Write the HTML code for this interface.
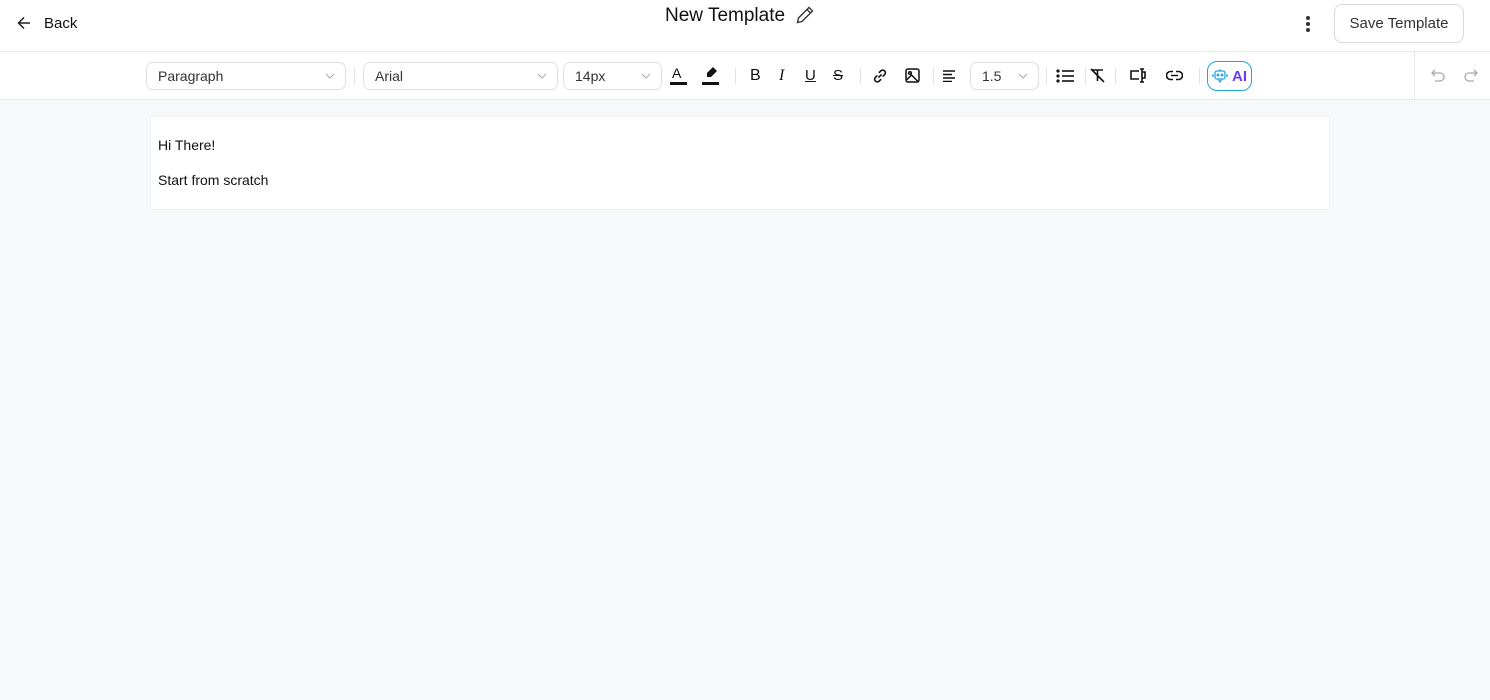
<!DOCTYPE html>
<html><head><style>
*{box-sizing:border-box;margin:0;padding:0}
body{width:1490px;height:700px;background:#f7f8fa;font-family:"Liberation Sans",Arial,sans-serif;position:relative;overflow:hidden;color:#111}
.hdr{position:absolute;left:0;top:0;width:1490px;height:52px;background:#fff;border-bottom:1px solid #e6e8eb}
.tb{position:absolute;left:0;top:52px;width:1490px;height:48px;background:#fff;border-bottom:1px solid #e6e8eb}
.a{position:absolute}
.sel{position:absolute;top:10px;height:28px;border:1px solid #dcdfe4;border-radius:7px;font-size:14px;color:#333;padding:5px 11px}
.sel svg{position:absolute;right:10px;top:10px}
.sep{position:absolute;top:16px;width:1px;height:16px;background:#e2e4e8}
</style></head><body>
<div class="hdr">
 <svg class="a" style="left:17px;top:16px" width="14" height="14" viewBox="0 0 14 14" fill="none" stroke="#222" stroke-width="1.5"><path d="M13 7H1.5M7 1.5L1.5 7 7 12.5"/></svg>
 <div class="a" style="left:44px;top:15px;font-size:15px;color:#111">Back</div>
 <div class="a" style="left:665px;top:5px;font-size:19px;color:#111">New Template</div>
 <svg class="a" style="left:795px;top:5px" width="20" height="20" viewBox="0 0 20 20" fill="none" stroke="#333" stroke-width="1.4"><path d="M14 2.5l3.5 3.5L7 16.5 2.5 17.5 3.5 13z M12 4.5l3.5 3.5"/></svg>
 <div class="a" style="left:1306px;top:16px;width:4px;height:4px;border-radius:2px;background:#333;box-shadow:0 6px 0 #333,0 12px 0 #333"></div>
 <div class="a" style="left:1334px;top:4px;width:130px;height:39px;border:1px solid #d6d9de;border-radius:8px;font-size:15px;color:#333;text-align:center;line-height:38px">Save Template</div>
</div>
<div class="tb">
 <div class="sel" style="left:146px;width:200px">Paragraph<svg width="10" height="6" viewBox="0 0 10 6" fill="none" stroke="#aaa"><path d="M1 1l4 4 4-4"/></svg></div>
 <div class="sep" style="left:354px"></div>
 <div class="sel" style="left:363px;width:195px">Arial<svg width="10" height="6" viewBox="0 0 10 6" fill="none" stroke="#aaa"><path d="M1 1l4 4 4-4"/></svg></div>
 <div class="sel" style="left:563px;width:99px">14px<svg width="10" height="6" viewBox="0 0 10 6" fill="none" stroke="#aaa"><path d="M1 1l4 4 4-4"/></svg></div>
 <div class="a" style="left:672px;top:13px;font-size:14px">A</div>
 <div class="a" style="left:670px;top:30px;width:17px;height:3px;background:#111"></div>
 <svg class="a" style="left:703px;top:14px" width="16" height="14" viewBox="0 0 16 14" fill="#111"><path d="M10 1l4 4-6 6H4v-4z"/></svg>
 <div class="a" style="left:702px;top:30px;width:17px;height:3px;background:#111"></div>
 <div class="sep" style="left:735px"></div>
 <div class="a" style="left:750px;top:15px;font-size:16px">B</div>
 <div class="a" style="left:779px;top:15px;font-size:16px;font-style:italic;font-family:'Liberation Serif',serif">I</div>
 <div class="a" style="left:805px;top:15px;font-size:15px;text-decoration:underline">U</div>
 <div class="a" style="left:833px;top:15px;font-size:15px;text-decoration:line-through">S</div>
 <div class="sep" style="left:860px"></div>
 <svg class="a" style="left:872px;top:16px" width="16" height="16" viewBox="0 0 15 15" fill="none" stroke="#111" stroke-width="1.5"><path d="M6 9l3-3M5 7L3 9a2.5 2.5 0 003.5 3.5L8.5 10.5M10 8l2-2A2.5 2.5 0 008.5 2.5L6.5 4.5"/></svg>
 <svg class="a" style="left:905px;top:16px" width="15" height="15" viewBox="0 0 15 15" fill="none" stroke="#111" stroke-width="1.5"><rect x="1" y="1" width="13" height="13" rx="2"/><circle cx="5" cy="5" r="1.3"/><path d="M1.5 12l5-5 7 7"/></svg>
 <div class="sep" style="left:933px"></div>
 <svg class="a" style="left:942px;top:18px" width="14" height="12" viewBox="0 0 14 12" fill="none" stroke="#111" stroke-width="1.5"><path d="M1 1h12M1 4.5h9M1 8h12M1 11.5h9"/></svg>
 <div class="sel" style="left:970px;width:69px">1.5<svg width="10" height="6" viewBox="0 0 10 6" fill="none" stroke="#aaa"><path d="M1 1l4 4 4-4"/></svg></div>
 <div class="sep" style="left:1046px"></div>
 <svg class="a" style="left:1056px;top:17px" width="18" height="14" viewBox="0 0 18 14" fill="#111"><circle cx="2" cy="2" r="1.6"/><circle cx="2" cy="7" r="1.6"/><circle cx="2" cy="12" r="1.6"/><rect x="6" y="1.2" width="12" height="1.6"/><rect x="6" y="6.2" width="12" height="1.6"/><rect x="6" y="11.2" width="12" height="1.6"/></svg>
 <div class="sep" style="left:1085px"></div>
 <svg class="a" style="left:1090px;top:16px" width="15" height="15" viewBox="0 0 15 15" fill="none" stroke="#111" stroke-width="1.6"><path d="M2 2h11M7.5 2v11M1 1l13 13"/></svg>
 <div class="sep" style="left:1115px"></div>
 <svg class="a" style="left:1130px;top:16px" width="17" height="15" viewBox="0 0 17 15" fill="none" stroke="#111" stroke-width="1.6"><path d="M9 3H1v8h8M12 1v13M10 1h4M10 14h4M12 4h3v6h-3"/></svg>
 <svg class="a" style="left:1166px;top:18px" width="17" height="11" viewBox="0 0 17 11" fill="none" stroke="#111" stroke-width="1.6"><path d="M7 1.5H4.5a4 4 0 000 8H7M10 1.5h2.5a4 4 0 010 8H10M5 5.5h7"/></svg>
 <div class="sep" style="left:1199px"></div>
 <div class="a" style="left:1207px;top:9px;width:45px;height:30px;border:1.5px solid #1aa6e8;border-radius:10px"></div>
 <svg class="a" style="left:1212px;top:16px" width="16" height="16" viewBox="0 0 16 16" fill="none" stroke="#2aa5e0" stroke-width="1.3"><rect x="3" y="3" width="10" height="8" rx="2"/><circle cx="6" cy="7" r=".8" fill="#2aa5e0"/><circle cx="10" cy="7" r=".8" fill="#2aa5e0"/><path d="M1 6v3M15 6v3M8 1v2M6 11l2 3 2-3"/></svg>
 <div class="a" style="left:1232px;top:16px;font-size:15px;font-weight:bold;color:#6b3cf0">AI</div>
 <div class="a" style="left:1414px;top:0;width:1px;height:48px;background:#e6e8eb"></div>
 <svg class="a" style="left:1431px;top:17px" width="14" height="13" viewBox="0 0 14 13" fill="none" stroke="#aaa" stroke-width="1.3"><path d="M4 1L1 4l3 3M1 4h8a4 4 0 010 8H4"/></svg>
 <svg class="a" style="left:1464px;top:17px" width="14" height="13" viewBox="0 0 14 13" fill="none" stroke="#aaa" stroke-width="1.3"><path d="M10 1l3 3-3 3M13 4H5a4 4 0 000 8h5"/></svg>
</div>
<div class="a" style="left:150px;top:116px;width:1180px;height:94px;background:#fff;border:1px solid #f0f1f3">
 <div class="a" style="left:7px;top:20px;font-size:14px">Hi There!</div>
 <div class="a" style="left:7px;top:55px;font-size:14px">Start from scratch</div>
</div>
</body></html>
